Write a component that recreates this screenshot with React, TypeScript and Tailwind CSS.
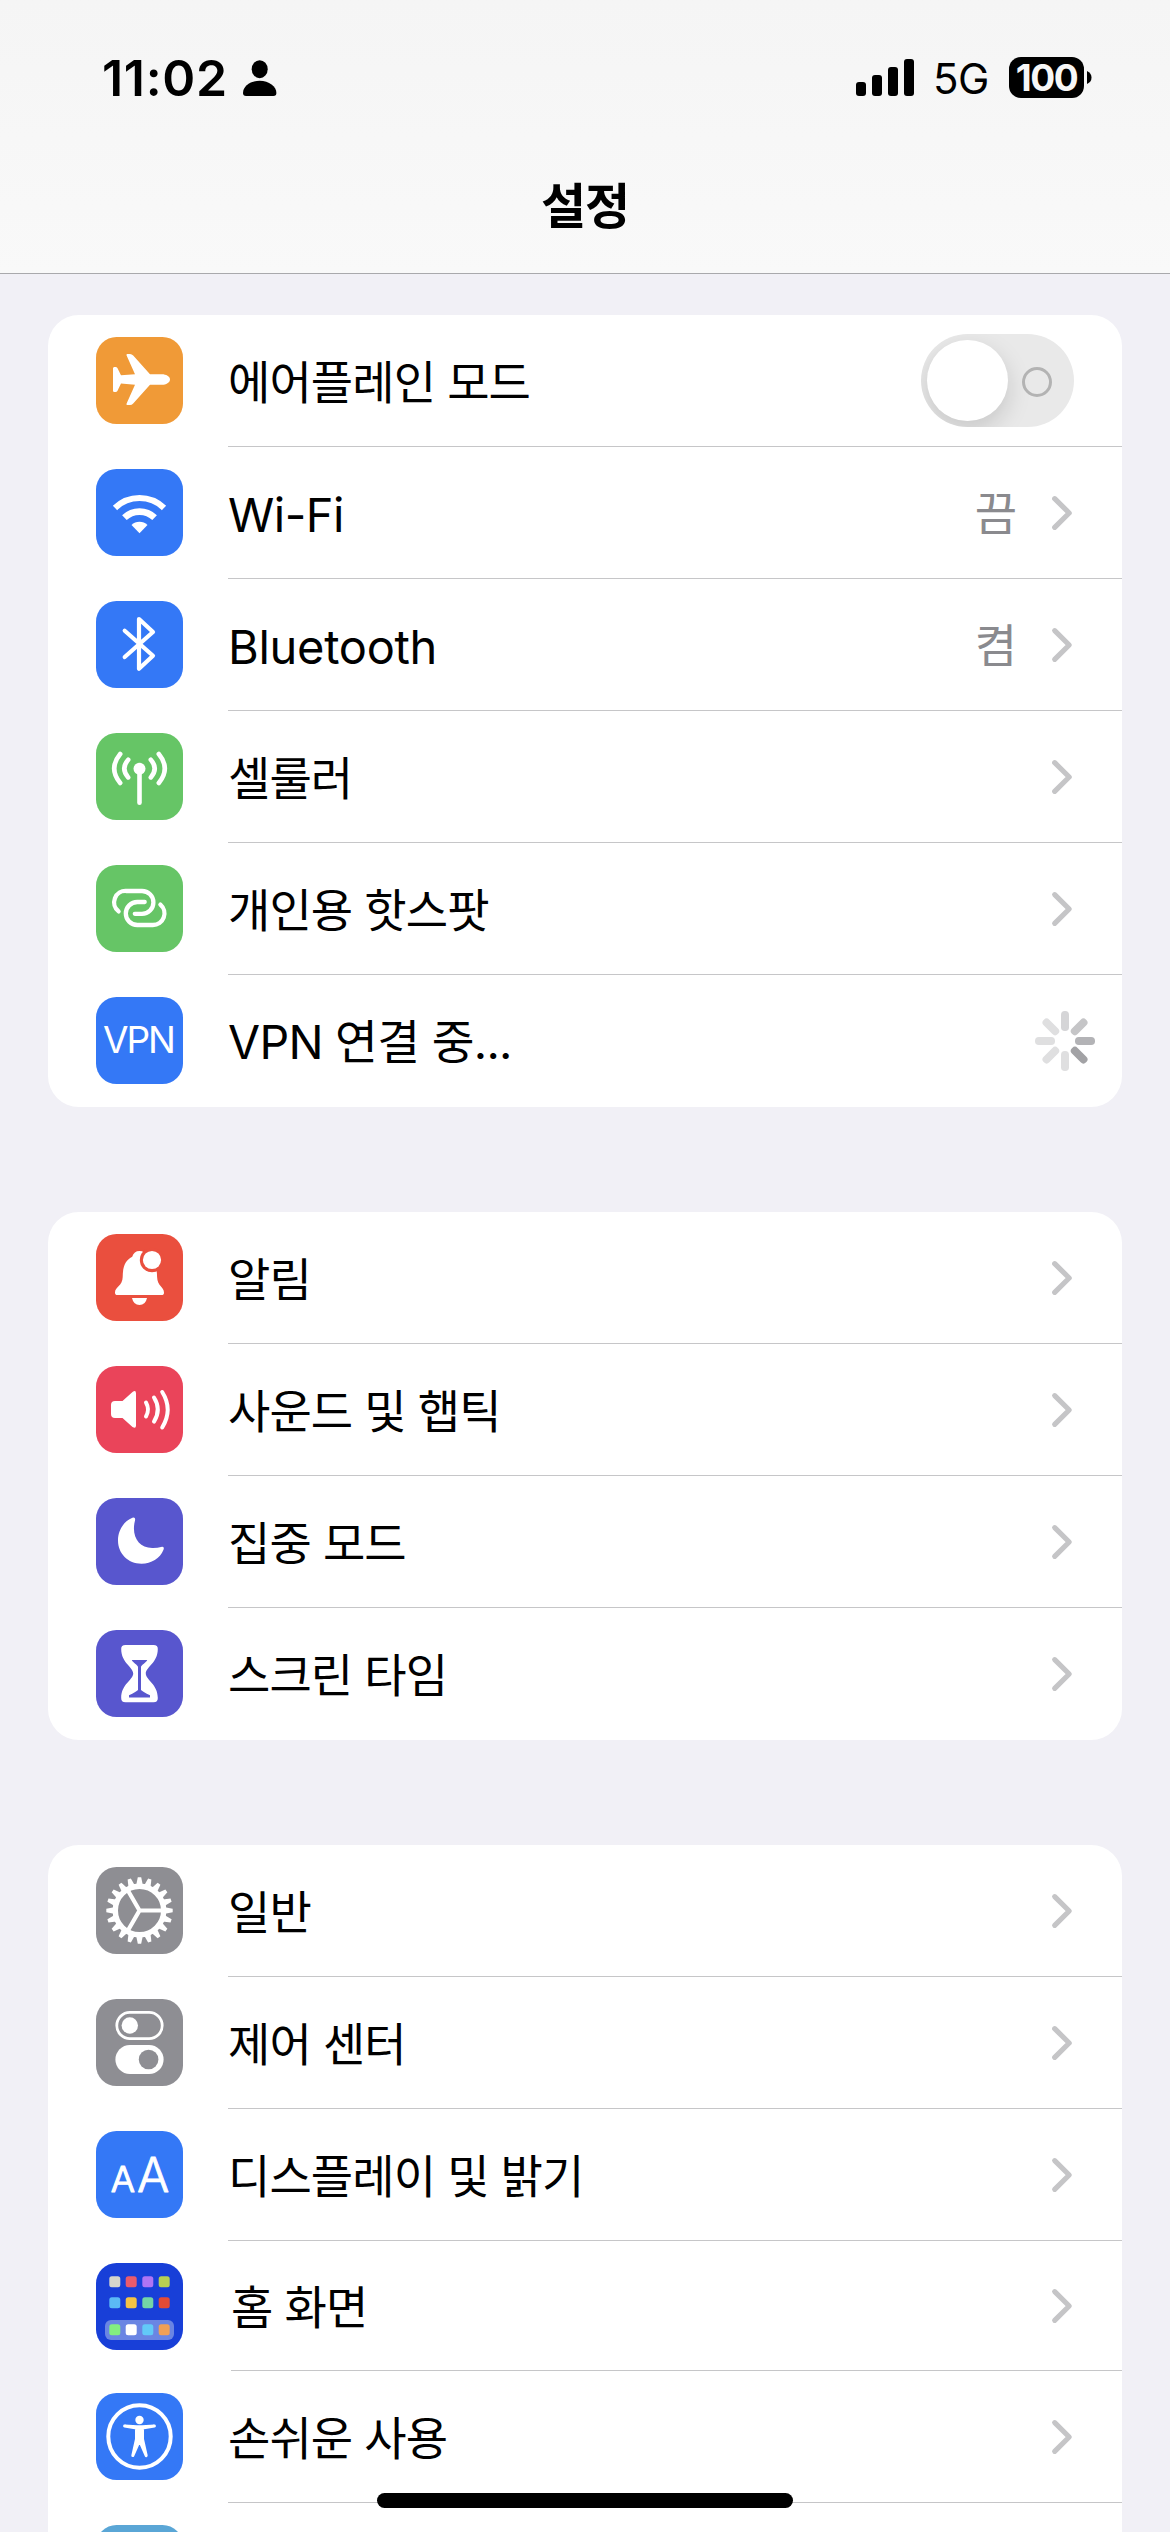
import type { ReactNode } from 'react';

type Row = {
  label: string;
  bg: string;
  icon: ReactNode;
  value?: string;
  labelClass?: string;
  rowClass?: string;
  lineClass?: string;
  trailing?: 'chevron' | 'toggle' | 'spinner';
};

const HOME_COLORS = [
  ['#d6d5cc', '#ea5b6c', '#b074f5', '#b8d052'],
  ['#5bb9f5', '#f5c344', '#73d6a6', '#e44b35'],
  ['#83ee80', '#ffffff', '#62c9f8', '#f0a055'],
];
const HOME_X = [13.3, 29.7, 46.3, 62.7];
const HOME_Y = [13.3, 34.3, 61.3];

const SPINNER_COLORS = ['#d5d5d7', '#c5c5c7', '#b3b3b6', '#a2a2a5', '#dfdfe0', '#dfdfe0', '#dfdfe0', '#dfdfe0'];

const TEETH = Array.from({ length: 20 }, (_, i) => i * 18);

const airplane = (
  <path
    d="M74 42.4C74 45.5 70 47.7 66 47.7H54L37.2 66.5Q35.8 68 34 68H31.3Q30 68 30.6 66.5L39 47.7L25 46.6L21.4 54Q20.8 55 19.5 55H18.2Q17 55 17 53.5V31.5Q17 30 18.2 30H19.5Q20.8 30 21.4 31L25 38.3L39 37.2L30.6 18.5Q30 17 31.3 17H34Q35.8 17 37.2 18.5L54 37.2H66C70 37.2 74 39.4 74 42.4Z"
    fill="#fff"
  />
);

const wifi = (
  <g fill="none" stroke="#fff">
    <path d="M19 38.9A35.3 35.3 0 0 1 68 38.9" strokeWidth="6.2" />
    <path d="M28.4 48.7A21.7 21.7 0 0 1 58.6 48.7" strokeWidth="6.6" />
    <path d="M43.5 64.3L35.5 56A11.5 11.5 0 0 1 51.5 56Z" fill="#fff" stroke="none" />
  </g>
);

const bluetooth = (
  <path
    d="M28.7 29.7L57 54.7L43 67.7V18L57 31L28.7 56"
    fill="none"
    stroke="#fff"
    strokeWidth="4.2"
    strokeLinecap="round"
    strokeLinejoin="round"
  />
);

const cellular = (
  <g fill="none" stroke="#fff" strokeWidth="4.6" strokeLinecap="round">
    <circle cx="43.5" cy="35.8" r="6" fill="#fff" stroke="none" />
    <path d="M43.5 36V69.7" />
    <path d="M32.2 26.7Q24.4 35.5 32.2 44.4M54.8 26.7Q62.6 35.5 54.8 44.4" />
    <path d="M24.2 21Q12.2 35.5 24.2 50M62.8 21Q74.8 35.5 62.8 50" />
  </g>
);

const hotspot = (
  <g fill="none" stroke="#fff" strokeWidth="4.3" strokeLinecap="round">
    <path d="M22.6 46.4A11.4 11.4 0 0 1 30.5 26H46A11.4 11.4 0 0 1 46 48.8H38.8" />
    <path d="M48.7 37H41.3A11.5 11.5 0 0 0 41.3 60H56.8A11.6 11.6 0 0 0 64.4 39.6" />
  </g>
);

const vpn = (
  <text x="43.5" y="55.7" textAnchor="middle" textLength="73" fontSize="37" fontFamily="Inter, sans-serif" fill="#fff">
    VPN
  </text>
);

const bell = (
  <g fill="#fff">
    <path d="M21.5 61Q19 61 19 58.4C19 53 26.5 52 26.7 43C26.8 33 29 26.5 36.2 22.8Q38 17 43.5 17Q49 17 50.8 22.8C58 26.5 61 33 61.1 43C61.3 52 68 53 68 58.4Q68 61 65.5 61Z" />
    <path d="M36 64H51Q49.5 71 43.5 71Q37.5 71 36 64Z" />
    <circle cx="56" cy="26" r="12.2" fill="#ea4f3e" />
    <circle cx="56" cy="26" r="9.1" />
  </g>
);

const sound = (
  <g fill="none" stroke="#fff" strokeWidth="4" strokeLinecap="round">
    <path
      d="M19 35H26.5L36.5 26Q40 23.6 40 27.5V59.4Q40 63.2 36.5 61L26.5 52H19Q15 52 15 48V39Q15 35 19 35Z"
      fill="#fff"
      stroke="none"
    />
    <path d="M50 36.5Q54 43.5 50 50.5" />
    <path d="M58 31.5Q65.6 43.5 58 55.6" />
    <path d="M66.2 26Q77.2 43.5 66.2 61.5" />
  </g>
);

const moon = (
  <path
    d="M36.4 19.8Q39.8 18.8 39 22.5C35 38 42.5 50.5 57 50Q62 49.9 65 48.9Q68.9 48.2 67.4 52C64 60.3 55.3 65.7 45.5 65.7C32 65.7 22 55.5 22 42.5C22 32 28 23.2 36.4 19.8Z"
    fill="#fff"
  />
);

const hourglass = (
  <g>
    <path
      d="M29.5 15H57.5Q62 15 61.8 19C61.8 33 49.8 37 49.8 43.5C49.8 50 61.8 54 61.8 68Q62 72.2 57.5 72.2H29.5Q25 72.2 25.2 68C25.2 54 37.2 50 37.2 43.5C37.2 37 25.2 33 25.2 19Q25 15 29.5 15Z"
      fill="#fff"
    />
    <path
      d="M35.8 30H51.2C50.5 32.5 45 35 45 37V60Q47 62 54 65.3V67.4H33V65.3Q40 62 42 60V37C42 35 36.5 32.5 35.8 30Z"
      fill="#5856ce"
    />
  </g>
);

const gear = (
  <g fill="none" stroke="#fff">
    <circle cx="43.5" cy="43.5" r="24.2" strokeWidth="5.4" />
    {TEETH.map((a) => (
      <path key={a} d="M69 40.2L76.7 41.8V45.2L69 46.8Z" fill="#fff" stroke="none" transform={`rotate(${a} 43.5 43.5)`} />
    ))}
    <path d="M43.5 43.5H66M43.5 43.5L32.2 24M43.5 43.5L32.2 63" strokeWidth="4.2" />
  </g>
);

const controls = (
  <g fill="none" stroke="#fff">
    <rect x="20.8" y="13.4" width="45.4" height="26.2" rx="13.1" strokeWidth="2.8" />
    <circle cx="33.8" cy="26.5" r="8.2" fill="#fff" stroke="none" />
    <rect x="19.4" y="46" width="48.2" height="29" rx="14.5" fill="#fff" stroke="none" />
    <circle cx="52.6" cy="60.5" r="9.8" fill="#8e8e93" stroke="none" />
  </g>
);

const textSize = (
  <g fill="#fff" stroke="#fff" strokeLinejoin="round" fontFamily="Inter, sans-serif" fontWeight="300">
    <text x="26.8" y="61" textAnchor="middle" fontSize="36" strokeWidth="1.2">
      A
    </text>
    <text x="57.2" y="61" textAnchor="middle" fontSize="48" strokeWidth="0.8">
      A
    </text>
  </g>
);

const homeScreen = (
  <g>
    <rect x="9" y="57" width="69" height="20" rx="6" fill="#6a85e3" />
    {HOME_COLORS.map((row, r) =>
      row.map((c, i) => <rect key={`${r}-${i}`} x={HOME_X[i]} y={HOME_Y[r]} width="11" height="11" rx="2.5" fill={c} />)
    )}
  </g>
);

const accessibility = (
  <g fill="#fff" stroke="#fff" strokeLinejoin="round" strokeLinecap="round">
    <circle cx="43.5" cy="43.5" r="31.2" fill="none" strokeWidth="4" />
    <circle cx="43.5" cy="27" r="4.2" stroke="none" />
    <path
      d="M28.6 33L40.5 35V46L36.8 62.6L43.5 47.5L50.2 62.6L46.5 46V35L58.4 33L46 33.8H41Z"
      strokeWidth="3"
    />
  </g>
);

const GROUPS: Row[][] = [
  [
    { label: '에어플레인 모드', bg: '#f09a37', icon: airplane, trailing: 'toggle' },
    { label: 'Wi-Fi', bg: '#3478f6', icon: wifi, value: '끔', labelClass: 'pt-1 text-[47px] tracking-[-0.5px]' },
    { label: 'Bluetooth', bg: '#3478f6', icon: bluetooth, value: '켬', labelClass: 'pt-1 text-[47px] tracking-[-0.3px]' },
    { label: '셀룰러', bg: '#66c566', icon: cellular },
    { label: '개인용 핫스팟', bg: '#66c566', icon: hotspot },
    {
      label: 'VPN 연결 중...',
      bg: '#3478f6',
      icon: vpn,
      trailing: 'spinner',
      labelClass: 'pt-[2px] text-[46.5px] tracking-[-0.7px]',
    },
  ],
  [
    { label: '알림', bg: '#ea4f3e', icon: bell },
    { label: '사운드 및 햅틱', bg: '#ea445a', icon: sound },
    { label: '집중 모드', bg: '#5856ce', icon: moon },
    { label: '스크린 타임', bg: '#5856ce', icon: hourglass },
  ],
  [
    { label: '일반', bg: '#8e8e93', icon: gear },
    { label: '제어 센터', bg: '#8e8e93', icon: controls },
    { label: '디스플레이 및 밝기', bg: '#3478f6', icon: textSize },
    { label: '홈 화면', bg: '#183fd8', icon: homeScreen, rowClass: 'h-[130px]', lineClass: 'ml-12' },
    { label: '손쉬운 사용', bg: '#3478f6', icon: accessibility },
    { label: '', bg: '#5aa6d6', icon: null },
  ],
];

function Chevron() {
  return (
    <svg className="mr-[49px] h-[36px] w-[22px]" viewBox="0 0 22 36" fill="none">
      <path d="M3.7 3.7L18.2 18L3.7 32.3" stroke="#c5c5c7" strokeWidth="5.2" strokeLinecap="round" strokeLinejoin="round" />
    </svg>
  );
}

function Toggle() {
  return (
    <div className="mr-12 flex h-[93px] w-[153px] items-center justify-between overflow-hidden rounded-full bg-[#e9e9e9] pr-[22px] pl-[6px]">
      <div className="h-[81px] w-[81px] rounded-full bg-white shadow-[0_9px_24px_rgba(0,0,0,0.15)]" />
      <div className="mt-[3px] h-[30px] w-[30px] rounded-full border-[3px] border-[#b3b3b3]" />
    </div>
  );
}

function Spinner() {
  return (
    <svg className="mr-[27px] h-[60px] w-[60px]" viewBox="0 0 60 60">
      {SPINNER_COLORS.map((c, i) => (
        <rect key={i} x="26" y="0" width="8" height="20" rx="3.8" fill={c} transform={`rotate(${i * 45} 30 30)`} />
      ))}
    </svg>
  );
}

function SettingsRow({ row, last }: { row: Row; last: boolean }) {
  const trailing = row.trailing ?? 'chevron';
  return (
    <div className={`flex shrink-0 pl-12 ${row.rowClass ?? 'h-[132px]'}`}>
      <svg className="mt-[22px] h-[87px] w-[87px] shrink-0" viewBox="0 0 87 87">
        <rect width="87" height="87" rx="20.5" fill={row.bg} />
        {row.icon}
      </svg>
      <div
        className={`flex flex-1 items-center ${row.lineClass ?? 'ml-[45px]'} ${last ? '' : 'border-b border-[#c6c6c8]'}`}
      >
        <span
          className={`flex-1 leading-none whitespace-nowrap ${row.labelClass ?? 'pt-[2px] text-[46px] tracking-[-0.9px]'}`}
        >
          {row.label}
        </span>
        {row.value && <span className="mr-[34px] text-[46px] leading-none text-[#8a8a8e]">{row.value}</span>}
        {trailing === 'chevron' && <Chevron />}
        {trailing === 'toggle' && <Toggle />}
        {trailing === 'spinner' && <Spinner />}
      </div>
    </div>
  );
}

function StatusBar() {
  return (
    <div className="flex h-[156px] items-start justify-between pr-[78px] pl-[102px]">
      <div className="flex pt-[53px]">
        <span className="w-[141px] text-[50px] leading-[50px] font-semibold tracking-[0.7px] whitespace-nowrap">11:02</span>
        <svg className="mt-[6px] h-[38px] w-[34px]" viewBox="0 0 34 38">
          <ellipse cx="16.7" cy="10.2" rx="8" ry="9" />
          <path d="M16.7 21.8C26 21.8 33.4 27.5 33.4 34Q33.4 37 30.4 37H3Q0 37 0 34C0 27.5 7.4 21.8 16.7 21.8Z" />
        </svg>
      </div>
      <div className="flex items-start pt-[57px]">
        <svg className="mt-[2px] h-[38px] w-[58px]" viewBox="0 0 58 38">
          <rect x="0" y="23" width="10" height="14" rx="3" />
          <rect x="16" y="16" width="10" height="21" rx="3" />
          <rect x="32" y="8" width="10" height="29" rx="3" />
          <rect x="48" y="0" width="10" height="37" rx="3" />
        </svg>
        <span className="ml-[19px] w-[76px] text-[42px] leading-[44px] tracking-[-0.5px]">5G</span>
        <div className="flex h-[41px] w-[75px] items-center justify-center rounded-[12px] bg-black text-[37px] leading-none font-bold tracking-[-1.4px] text-[#f7f7f7]">
          100
        </div>
        <svg className="mt-[14px] ml-[3px] h-[13px] w-[5px]" viewBox="0 0 5 13">
          <path d="M0 0Q4.5 2 4.5 6.5T0 13Z" />
        </svg>
      </div>
    </div>
  );
}

export default function App() {
  return (
    <div className="relative flex h-[2532px] w-[1170px] flex-col overflow-hidden bg-[#f1f0f6] font-[Inter,'Noto_Sans_CJK_KR',sans-serif] text-black">
      <header className="h-[274px] shrink-0 border-b border-[#a9a9ac] bg-linear-to-b from-[#f5f5f5] to-[#f9f9f9]">
        <StatusBar />
        <h1 className="text-center text-[49px] leading-[102px] font-bold tracking-[-1px]">설정</h1>
      </header>

      <main className="mx-12 mt-[41px] flex flex-col gap-[105px]">
        {GROUPS.map((rows, g) => (
          <section key={g} className="flex flex-col overflow-hidden rounded-[31px] bg-white">
            {rows.map((row, i) => (
              <SettingsRow key={i} row={row} last={i === rows.length - 1} />
            ))}
          </section>
        ))}
      </main>

      {/* Home indicator */}
      <div className="absolute bottom-6 left-[377px] h-[15px] w-[416px] rounded-full bg-black" />
    </div>
  );
}
